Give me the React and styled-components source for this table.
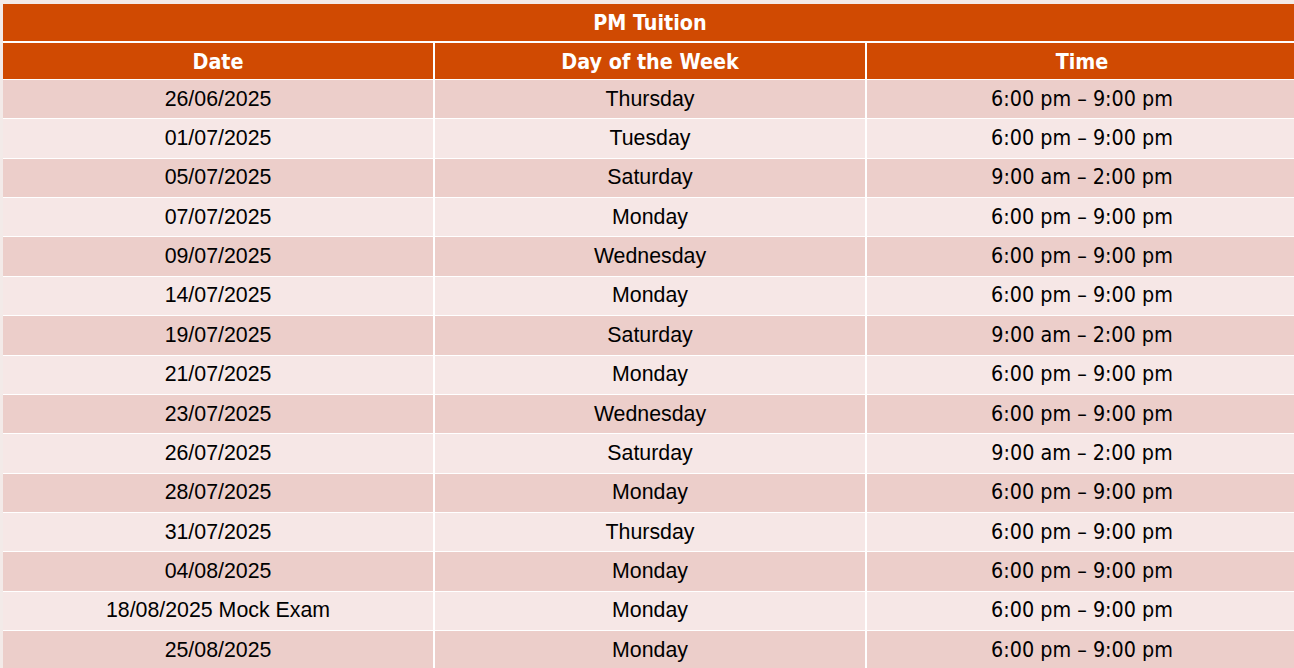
import React from 'react';
import styled, { createGlobalStyle } from 'styled-components';

const GlobalStyle = createGlobalStyle`
    html, body {
        margin: 0;
        padding: 0;
        background: #f3eae8;
        overflow: hidden;
    }
`;

const Page = styled.div`
    padding: 4px 0 0 3px;
    width: 1294px;
    height: 668px;
    box-sizing: border-box;
    overflow: hidden;
`;

const Table = styled.div`
    display: grid;
    grid-template-columns: 430px 430px 430px;
    column-gap: 2px;
    row-gap: 1px;
    width: 1294px;
    background: #ffffff;
`;

const Title = styled.div`
    grid-column: 1 / -1;
    height: 37px;
    margin-bottom: 1px;
    background: #d04a02;
    color: #ffffff;
    display: flex;
    align-items: center;
    justify-content: center;
    font-family: "DejaVu Sans Condensed", "DejaVu Sans", sans-serif;
    font-weight: bold;
    font-size: 21.33px;
`;

const HeadCell = styled.div`
    height: 36px;
    background: #d04a02;
    color: #ffffff;
    display: flex;
    align-items: center;
    justify-content: center;
    font-family: "DejaVu Sans Condensed", "DejaVu Sans", sans-serif;
    font-weight: bold;
    font-size: 21.33px;
`;

const Cell = styled.div`
    height: 38.36px;
    box-sizing: border-box;
    padding-bottom: ${p => (p.$tahoma ? '2px' : '0')};
    background: ${p => (p.$odd ? '#ecceca' : '#f6e7e6')};
    color: #000000;
    display: flex;
    align-items: center;
    justify-content: center;
    font-family: ${p => (p.$tahoma
        ? '"DejaVu Sans Condensed", "DejaVu Sans", sans-serif'
        : '"Liberation Sans", Arial, sans-serif')};
    font-size: 21.33px;
`;

const EVE = '6:00 pm – 9:00 pm';
const SAT = '9:00 am – 2:00 pm';

const sessions = [
    ['26/06/2025', 'Thursday', EVE],
    ['01/07/2025', 'Tuesday', EVE],
    ['05/07/2025', 'Saturday', SAT],
    ['07/07/2025', 'Monday', EVE],
    ['09/07/2025', 'Wednesday', EVE],
    ['14/07/2025', 'Monday', EVE],
    ['19/07/2025', 'Saturday', SAT],
    ['21/07/2025', 'Monday', EVE],
    ['23/07/2025', 'Wednesday', EVE],
    ['26/07/2025', 'Saturday', SAT],
    ['28/07/2025', 'Monday', EVE],
    ['31/07/2025', 'Thursday', EVE],
    ['04/08/2025', 'Monday', EVE],
    ['18/08/2025 Mock Exam', 'Monday', EVE],
    ['25/08/2025', 'Monday', EVE],
];

const App = () => {
    return (
        <Page>
            <GlobalStyle />
            <Table>
                <Title>PM Tuition</Title>
                <HeadCell>Date</HeadCell>
                <HeadCell>Day of the Week</HeadCell>
                <HeadCell>Time</HeadCell>
                {sessions.map(([date, day, time], i) => (
                    <React.Fragment key={date}>
                        <Cell $odd={i % 2 === 0}>{date}</Cell>
                        <Cell $odd={i % 2 === 0}>{day}</Cell>
                        <Cell $odd={i % 2 === 0} $tahoma>{time}</Cell>
                    </React.Fragment>
                ))}
            </Table>
        </Page>
    );
};

export default App;
